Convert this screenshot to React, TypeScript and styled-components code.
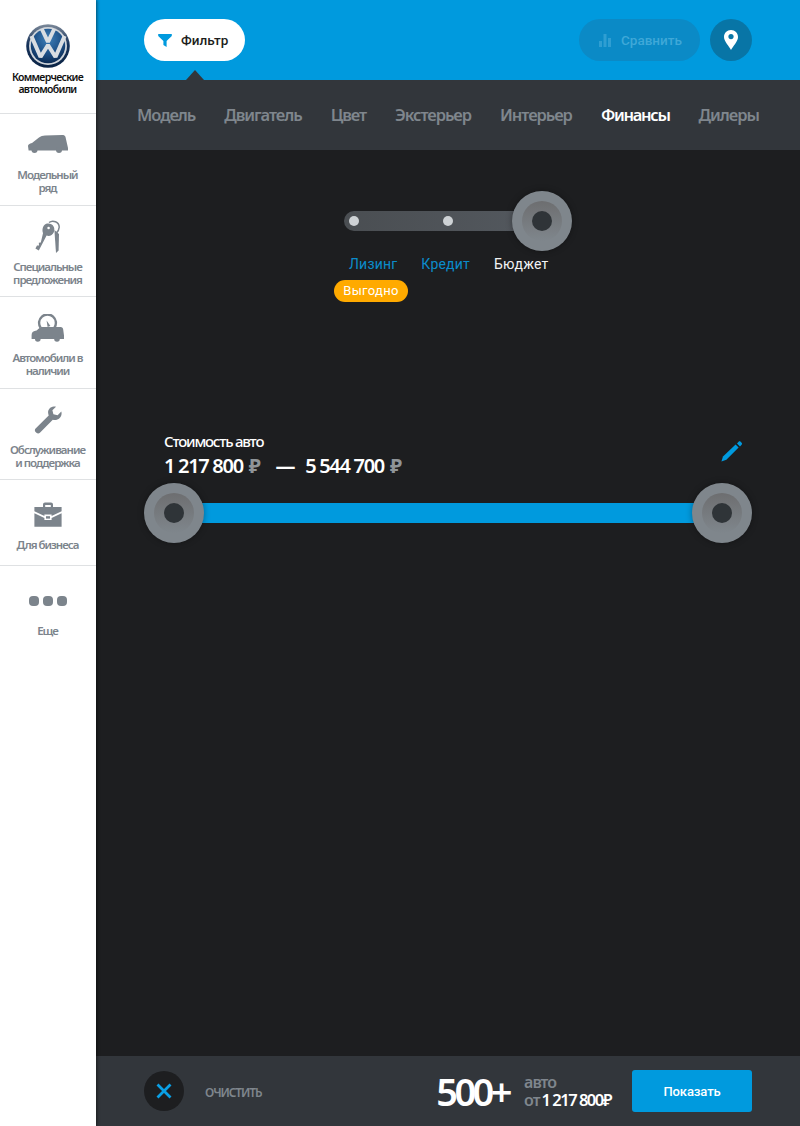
import React from 'react';
import styled, { createGlobalStyle } from 'styled-components';

const colors = {
  blue: '#009ade',
  white: '#ffffff',
  dark: '#1d1e20',
  panel: '#32363b',
  gray: '#7f868d',
  sideGray: '#7c848c',
  line: '#dfe1e3',
};

const GlobalStyle = createGlobalStyle`
  html, body { margin: 0; padding: 0; background: ${colors.dark}; }
  * { box-sizing: border-box; }
  body { font-family: 'Noto Sans', 'Open Sans', sans-serif; }
`;

const Page = styled.div`
  width: 800px;
  height: 1126px;
  display: flex;
  overflow: hidden;
`;

const Sidebar = styled.aside`
  width: 96px;
  flex: none;
  background: ${colors.white};
  box-shadow: 1px 0 3px rgba(0, 0, 0, 0.5);
  z-index: 2;
  display: flex;
  flex-direction: column;
`;

const LogoBlock = styled.div`
  height: 114px;
  padding: 24px 1px 0 0;
  border-bottom: 1px solid ${colors.line};
  display: flex;
  flex-direction: column;
  align-items: center;
`;

const LogoText = styled.div`
  margin-top: 4px;
  font-size: 10.5px;
  line-height: 11.5px;
  font-weight: 600;
  letter-spacing: -0.7px;
  text-align: center;
  color: #111;
`;

const SideItem = styled.div<{ $h: number }>`
  height: ${(p) => p.$h}px;
  padding-right: 1px;
  border-bottom: ${(p) => (p.$h > 100 ? 'none' : `1px solid ${colors.line}`)};
  display: flex;
  flex-direction: column;
  align-items: center;
`;

const SideIcon = styled.div<{ $top: number; $h: number }>`
  margin-top: ${(p) => p.$top}px;
  height: ${(p) => p.$h}px;
  display: flex;
  align-items: center;
  justify-content: center;
  color: ${colors.sideGray};
`;

const SideLabel = styled.div<{ $gap: number }>`
  margin-top: ${(p) => p.$gap}px;
  font-size: 11.5px;
  line-height: 13px;
  font-weight: 600;
  letter-spacing: -1px;
  white-space: nowrap;
  text-align: center;
  color: ${colors.sideGray};
`;

const Main = styled.main`
  flex: 1;
  min-width: 0;
  display: flex;
  flex-direction: column;
  background: ${colors.dark};
`;

const TopBar = styled.header`
  height: 80px;
  flex: none;
  padding: 19px 48px 0;
  background: ${colors.blue};
  display: flex;
  align-items: flex-start;
  position: relative;
`;

const FilterButton = styled.button`
  width: 101px;
  height: 42px;
  border: none;
  border-radius: 21px;
  background: ${colors.white};
  color: #1c1e20;
  padding: 0 0 0 14px;
  display: flex;
  align-items: center;
  gap: 9px;
  font-family: Roboto, sans-serif;
  font-size: 13.5px;
  font-weight: 500;
`;

const Caret = styled.div`
  position: absolute;
  left: 90px;
  bottom: 0;
  width: 0;
  height: 0;
  border-left: 9px solid transparent;
  border-right: 9px solid transparent;
  border-bottom: 10px solid ${colors.panel};
`;

const TopRight = styled.div`
  margin-left: auto;
  display: flex;
  gap: 10px;
`;

const CompareButton = styled.button`
  width: 121px;
  height: 42px;
  border: none;
  border-radius: 21px;
  background: #0b8ac6;
  color: #3fa8d8;
  padding: 0 0 0 20px;
  display: flex;
  align-items: center;
  gap: 10px;
  font-family: Roboto, sans-serif;
  font-size: 13.5px;
  font-weight: 500;
`;

const PinButton = styled.button`
  width: 42px;
  height: 42px;
  border: none;
  border-radius: 50%;
  padding: 0;
  background: #0875a6;
  display: flex;
  align-items: center;
  justify-content: center;
`;

const NavBar = styled.nav`
  height: 70px;
  flex: none;
  padding: 0 0 2px 41px;
  background: ${colors.panel};
  display: flex;
  align-items: center;
  gap: 29px;
`;

const NavItem = styled.a<{ $active?: boolean }>`
  font-size: 16.5px;
  font-weight: 600;
  letter-spacing: ${(p) => (p.$active ? '-1.3px' : '-1.05px')};
  white-space: nowrap;
  color: ${(p) => (p.$active ? colors.white : colors.gray)};
`;

const Content = styled.section`
  flex: 1;
  padding: 41px 48px 0;
  display: flex;
  flex-direction: column;
`;

const Mode = styled.div`
  margin-left: 198px;
  width: 240px;
  height: 112px;
  position: relative;
  flex: none;
`;

const ModeTrack = styled.div`
  position: absolute;
  left: 2px;
  top: 20px;
  width: 190px;
  height: 20px;
  border-radius: 10px;
  background: linear-gradient(90deg, #4a4e52, #53585e);
`;

const ModeDot = styled.span<{ $x: number }>`
  position: absolute;
  left: ${(p) => p.$x}px;
  top: 5px;
  width: 10px;
  height: 10px;
  border-radius: 50%;
  background: #ced2d5;
`;

const Thumb = styled.div`
  width: 60px;
  height: 60px;
  border-radius: 50%;
  background: #7f868c;
  box-shadow: 0 0 6px rgba(0, 0, 0, 0.35);
  display: flex;
  align-items: center;
  justify-content: center;
  flex: none;
`;

const ThumbRing = styled.div`
  width: 40px;
  height: 40px;
  border-radius: 50%;
  background: linear-gradient(#6d6e70, #7f868c);
  display: flex;
  align-items: center;
  justify-content: center;
`;

const ThumbCore = styled.div`
  width: 20px;
  height: 20px;
  border-radius: 50%;
  background: #2f3438;
`;

const ModeThumb = styled.div`
  position: absolute;
  left: 170px;
  top: 0;
`;

const ModeLabels = styled.div`
  position: absolute;
  top: 64px;
  left: 7px;
  display: flex;
  gap: 24px;
`;

const ModeLabel = styled.span<{ $active?: boolean }>`
  font-family: Roboto, sans-serif;
  font-size: 14px;
  line-height: 18px;
  letter-spacing: 0.2px;
  color: ${(p) => (p.$active ? '#f2f3f4' : '#0b8ccb')};
`;

const Badge = styled.span`
  position: absolute;
  left: -8px;
  top: 89px;
  width: 74px;
  height: 22px;
  border-radius: 11px;
  background: #ffaa00;
  color: ${colors.white};
  font-family: Roboto, sans-serif;
  font-size: 13px;
  line-height: 22px;
  letter-spacing: 0.3px;
  text-align: center;
`;

const Range = styled.div`
  margin-top: 128px;
  display: flex;
  flex-direction: column;
`;

const RangeHead = styled.div`
  padding: 0 0 0 20px;
  height: 52px;
  display: flex;
  justify-content: space-between;
`;

const RangeTitle = styled.div`
  font-size: 15px;
  line-height: 20px;
  font-weight: 500;
  letter-spacing: -1.2px;
  color: ${colors.white};
`;

const RangeValues = styled.div`
  margin-top: 3px;
  display: flex;
  align-items: center;
  font-size: 20px;
  line-height: 24px;
  font-weight: 600;
  letter-spacing: -1.3px;
  color: ${colors.white};
`;

const Rub = styled.span`
  margin-left: 6px;
  font-weight: 700;
  color: #8f9498;
`;

const Dash = styled.span`
  margin: 0 11px 0 16px;
  font-weight: 700;
`;

const EditIcon = styled.div`
  margin: 10px 9px 0 0;
  height: 24px;
`;

const RangeTrack = styled.div`
  height: 60px;
  display: flex;
  align-items: center;
  justify-content: space-between;
  position: relative;
  &::before {
    content: '';
    position: absolute;
    left: 30px;
    right: 30px;
    top: 20px;
    height: 20px;
    background: ${colors.blue};
  }
  & > * {
    position: relative;
  }
`;

const Footer = styled.footer`
  height: 70px;
  flex: none;
  padding: 0 48px;
  background: ${colors.panel};
  display: flex;
  align-items: center;
`;

const ClearButton = styled.button`
  width: 40px;
  height: 40px;
  border: none;
  border-radius: 50%;
  padding: 0;
  background: ${colors.dark};
  display: flex;
  align-items: center;
  justify-content: center;
`;

const ClearText = styled.span`
  margin: 2px 0 0 21px;
  font-size: 12px;
  font-weight: 600;
  letter-spacing: -1.1px;
  color: ${colors.gray};
`;

const Count = styled.div`
  margin-left: auto;
  font-size: 38px;
  line-height: 44px;
  font-weight: 600;
  letter-spacing: -3.5px;
  color: ${colors.white};
`;

const Price = styled.div`
  margin: 0 0 1px 15px;
  display: flex;
  flex-direction: column;
  font-size: 16px;
  line-height: 18px;
  font-weight: 600;
  letter-spacing: -1px;
  color: ${colors.gray};
`;

const PriceValue = styled.span`
  color: ${colors.white};
  font-weight: 600;
  margin-left: 2px;
  font-size: 16.5px;
  letter-spacing: -1.5px;
`;

const ShowButton = styled.button`
  margin-left: 21px;
  width: 120px;
  height: 42px;
  border: none;
  border-radius: 3px;
  background: ${colors.blue};
  color: ${colors.white};
  font-family: Roboto, sans-serif;
  font-size: 13px;
  font-weight: 500;
  letter-spacing: -0.1px;
`;

const VwLogo = () => (
  <svg width="44" height="44" viewBox="0 0 44 44">
    <defs>
      <radialGradient id="vwBlue" cx="50%" cy="30%" r="70%">
        <stop offset="0%" stopColor="#3f7fb8" />
        <stop offset="60%" stopColor="#1d4f86" />
        <stop offset="100%" stopColor="#0c2c55" />
      </radialGradient>
      <linearGradient id="vwRim" x1="0" y1="0" x2="0" y2="1">
        <stop offset="0%" stopColor="#7d8a9a" />
        <stop offset="45%" stopColor="#16325a" />
        <stop offset="100%" stopColor="#0b2445" />
      </linearGradient>
    </defs>
    <circle cx="22" cy="22" r="21.8" fill="url(#vwRim)" />
    <circle cx="22" cy="22" r="19" fill="#cfd4da" />
    <circle cx="22" cy="22" r="17.2" fill="url(#vwBlue)" />
    <path
      d="M15.8 5 L22 18 L28.2 5 M5.4 12 L14.5 33 L22 21 L29.5 33 L38.6 12"
      fill="none"
      stroke="#d9dde2"
      strokeWidth="4"
      strokeLinejoin="bevel"
    />
  </svg>
);

const VanIcon = () => (
  <svg width="40" height="18" viewBox="0 0 40 18" fill="currentColor">
    <path d="M0 11 C0 9.5 1.5 8.5 4 8 L11 2.5 C12.5 1.2 15 0.6 17 0.5 L34 0 C36 0 37 0.6 37.5 2 L40 13 V15.5 H0.6 Z" />
    <circle cx="6.5" cy="15" r="3" />
    <circle cx="31" cy="15" r="3" />
  </svg>
);

const KeysIcon = () => (
  <svg width="26" height="34" viewBox="0 0 26 34" fill="none">
    <path d="M14 2.5 C18 -0.5 24 2 24.2 7 C24.4 10.5 22 12.5 20.5 14" stroke="currentColor" strokeWidth="1.5" />
    <path d="M19.4 10 L21 33 L23.6 30.5 L24 14" fill="currentColor" />
    <path d="M12 3.6 C17.4 2.8 20.8 7.4 18.8 12.2 C17.6 15.2 14.4 16.6 11.6 15.6 L3.8 30.4 L0.4 28.4 L2 25.4 L4 25.4 L3.8 22.8 L5.8 22.6 L8 13.2 C6.6 9 8.4 4.4 12 3.6 Z" fill="currentColor" />
    <circle cx="13.6" cy="8" r="1.3" fill="#fff" />
  </svg>
);

const StockIcon = () => (
  <svg width="34" height="28" viewBox="0 0 34 28" fill="currentColor">
    <path d="M9.5 13.5 A8.4 8.4 0 1 1 23.5 13.5" fill="none" stroke="currentColor" strokeWidth="2.4" />
    <path d="M15.6 6.5 L19.4 12 L16.6 13 Z" />
    <path d="M0.6 21 C0.6 18 2.6 17 5.6 16.5 L9.6 13 L29.6 13 C31.2 13 32 14 32.2 15.5 L33 21.5 L33 25 L0.6 25 Z" />
    <circle cx="6.8" cy="25" r="2.8" />
    <circle cx="26" cy="25" r="2.8" />
  </svg>
);

const WrenchIcon = () => (
  <svg width="28" height="28" viewBox="0 0 28 28" fill="currentColor">
    <path d="M19.8 0.6 C16.2 0.8 13.6 3.8 14.2 7.6 C14.3 8.4 14.5 9 14.7 9.5 L1.6 22.4 C0.6 23.4 0.6 25 1.6 26 L2.4 26.8 C3.4 27.7 4.9 27.7 5.9 26.8 L18.8 13.7 C23.2 15 27.4 12 27.6 7.4 C27.6 6.7 27.5 6 27.3 5.4 L23.6 9.2 L19.4 8.2 L18.4 4.2 L22 0.8 C21.3 0.6 20.6 0.5 19.8 0.6 Z" />
  </svg>
);

const CaseIcon = () => (
  <svg width="28" height="26" viewBox="0 0 28 26" fill="currentColor">
    <path d="M9 5 V2.6 C9 1.4 9.9 0.6 11 0.6 H17 C18.1 0.6 19 1.4 19 2.6 V5 H16.8 V3 H11.2 V5 Z" />
    <path d="M0.4 5 H27.6 V9.2 L17.6 14 V12.6 H10.4 V14 L0.4 9.2 Z" />
    <path d="M0.4 11.2 L10.4 16 V18 H17.6 V16 L27.6 11.2 V24.8 H0.4 Z" />
    <rect x="12" y="14.2" width="4" height="2.4" />
  </svg>
);

const Dots = () => (
  <svg width="38" height="12" viewBox="0 0 38 12" fill="currentColor">
    <rect x="0" y="1" width="10" height="10" rx="4" />
    <rect x="14" y="1" width="10" height="10" rx="4" />
    <rect x="28" y="1" width="10" height="10" rx="4" />
  </svg>
);

const FilterIcon = () => (
  <svg width="14" height="13" viewBox="0 0 14 13" fill={colors.blue}>
    <path d="M0.2 0 H13.8 V2 L8.6 7 V13 L5.4 11 V7 L0.2 2 Z" />
  </svg>
);

const BarsIcon = () => (
  <svg width="12" height="13" viewBox="0 0 12 13" fill="#2f9ed2">
    <rect x="0" y="7" width="3" height="6" />
    <rect x="4.5" y="0" width="3" height="13" />
    <rect x="9" y="4" width="3" height="9" />
  </svg>
);

const PinIcon = () => (
  <svg width="14" height="20" viewBox="0 0 14 20">
    <path
      d="M7 0 C3 0 0 3 0 7 C0 11.5 5 16 7 20 C9 16 14 11.5 14 7 C14 3 11 0 7 0 Z"
      fill="#fff"
    />
    <circle cx="7" cy="6.6" r="2.6" fill="#0875a6" />
  </svg>
);

const PencilIcon = () => (
  <svg width="22" height="21" viewBox="0 0 22 21" fill={colors.blue}>
    <path d="M0.4 20.6 L2 15.6 L14.6 3.6 L17.6 6.6 L5.4 18.8 Z" />
    <path d="M16 2.4 L17.6 0.8 C18.2 0.2 19 0.2 19.6 0.8 L20.6 1.8 C21.2 2.4 21.2 3.2 20.6 3.8 L19 5.4 Z" />
  </svg>
);

const CrossIcon = () => (
  <svg width="16" height="16" viewBox="0 0 16 16">
    <path d="M1.5 1.5 L14.5 14.5 M14.5 1.5 L1.5 14.5" stroke="#0aa0e6" strokeWidth="2.8" />
  </svg>
);

const SliderThumb = () => (
  <Thumb>
    <ThumbRing>
      <ThumbCore />
    </ThumbRing>
  </Thumb>
);

const navItems = ['Модель', 'Двигатель', 'Цвет', 'Экстерьер', 'Интерьер', 'Финансы', 'Дилеры'];

function App() {
  return (
    <Page>
      <GlobalStyle />
      <Sidebar>
        <LogoBlock>
          <VwLogo />
          <LogoText>
            Коммерческие
            <br />
            автомобили
          </LogoText>
        </LogoBlock>
        <SideItem $h={92}>
          <SideIcon $top={20} $h={20}>
            <VanIcon />
          </SideIcon>
          <SideLabel $gap={14}>
            Модельный
            <br />
            ряд
          </SideLabel>
        </SideItem>
        <SideItem $h={91}>
          <SideIcon $top={14} $h={34}>
            <KeysIcon />
          </SideIcon>
          <SideLabel $gap={6}>
            Специальные
            <br />
            предложения
          </SideLabel>
        </SideItem>
        <SideItem $h={92}>
          <SideIcon $top={17} $h={28}>
            <StockIcon />
          </SideIcon>
          <SideLabel $gap={9}>
            Автомобили в
            <br />
            наличии
          </SideLabel>
        </SideItem>
        <SideItem $h={91}>
          <SideIcon $top={17} $h={28}>
            <WrenchIcon />
          </SideIcon>
          <SideLabel $gap={9}>
            Обслуживание
            <br />и поддержка
          </SideLabel>
        </SideItem>
        <SideItem $h={86}>
          <SideIcon $top={22} $h={26}>
            <CaseIcon />
          </SideIcon>
          <SideLabel $gap={10}>Для бизнеса</SideLabel>
        </SideItem>
        <SideItem $h={200}>
          <SideIcon $top={29} $h={12}>
            <Dots />
          </SideIcon>
          <SideLabel $gap={17}>Еще</SideLabel>
        </SideItem>
      </Sidebar>
      <Main>
        <TopBar>
          <FilterButton>
            <FilterIcon />
            Фильтр
          </FilterButton>
          <Caret />
          <TopRight>
            <CompareButton>
              <BarsIcon />
              Сравнить
            </CompareButton>
            <PinButton>
              <PinIcon />
            </PinButton>
          </TopRight>
        </TopBar>
        <NavBar>
          {navItems.map((item) => (
            <NavItem key={item} $active={item === 'Финансы'}>
              {item}
            </NavItem>
          ))}
        </NavBar>
        <Content>
          <Mode>
            <ModeTrack>
              <ModeDot $x={5} />
              <ModeDot $x={99} />
            </ModeTrack>
            <ModeThumb>
              <SliderThumb />
            </ModeThumb>
            <ModeLabels>
              <ModeLabel>Лизинг</ModeLabel>
              <ModeLabel>Кредит</ModeLabel>
              <ModeLabel $active>Бюджет</ModeLabel>
            </ModeLabels>
            <Badge>Выгодно</Badge>
          </Mode>
          <Range>
            <RangeHead>
              <div>
                <RangeTitle>Стоимость авто</RangeTitle>
                <RangeValues>
                  1 217 800<Rub>₽</Rub>
                  <Dash>—</Dash>5 544 700<Rub>₽</Rub>
                </RangeValues>
              </div>
              <EditIcon>
                <PencilIcon />
              </EditIcon>
            </RangeHead>
            <RangeTrack>
              <SliderThumb />
              <SliderThumb />
            </RangeTrack>
          </Range>
        </Content>
        <Footer>
          <ClearButton>
            <CrossIcon />
          </ClearButton>
          <ClearText>ОЧИСТИТЬ</ClearText>
          <Count>500+</Count>
          <Price>
            <span>авто</span>
            <span>
              от<PriceValue>1 217 800₽</PriceValue>
            </span>
          </Price>
          <ShowButton>Показать</ShowButton>
        </Footer>
      </Main>
    </Page>
  );
}

export default App;
